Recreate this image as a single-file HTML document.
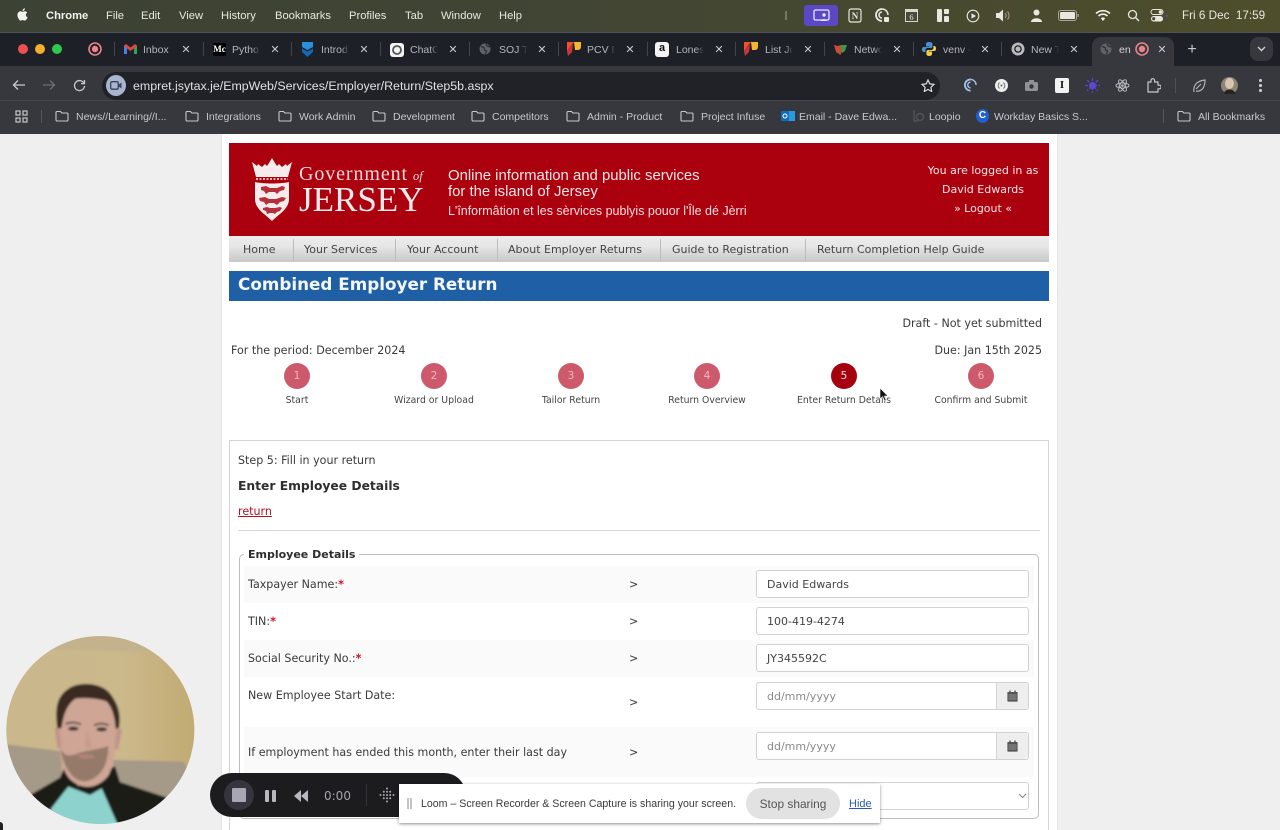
<!DOCTYPE html>
<html lang="en"><head><meta charset="utf-8"><title>Step 5b</title>
<style>
html,body{margin:0;padding:0;width:1280px;height:830px;overflow:hidden;background:#efefef}
body{position:relative;font-family:"DejaVu Sans",sans-serif;font-size:11.1px;color:#3a3a3a}
.a{position:absolute}
.t{position:absolute;white-space:nowrap;line-height:14px;margin-top:1px}
.c{transform:translateX(-50%)}
.r{transform:translateX(-100%)}
.m{font-family:"Liberation Sans",sans-serif;font-size:11.2px;color:#e8e8e0}
.tab{font-family:"Liberation Sans",sans-serif;font-size:10.5px;color:#b4b6ba}
.f{-webkit-mask-image:linear-gradient(90deg,#000 72%,transparent 100%);mask-image:linear-gradient(90deg,#000 72%,transparent 100%)}
.x{font-family:"Liberation Sans",sans-serif;font-size:11px;color:#c8cacc}
.b{font-family:"Liberation Sans",sans-serif;font-size:10.5px;color:#c6c8cb}
.nav{font-size:11px;color:#444}
.sep{position:absolute;top:239px;width:1px;height:22px;background:#bdbdbd}
.circ{position:absolute;top:363px;width:26px;height:26px;border-radius:50%;background:#cd5a6c;color:#eeb7be;text-align:center;line-height:26px;font-size:10.5px}
.lab{font-size:9.3px;color:#444}
.inp{position:absolute;left:756px;width:271px;height:26px;background:#fff;border:1px solid #d2d2d2;border-radius:3px}
.inp span{position:absolute;left:10px;top:6.500px;line-height:14px;color:#444;font-size:11px}
.ph span{color:#8a8a8a}
.add{position:absolute;right:0;top:0;width:31px;height:26px;background:#eee;border-left:1px solid #d6d6d6;border-radius:0 3px 3px 0}
.add svg{position:absolute;left:10px;top:7px}
svg{display:block}
</style></head><body>
<svg width="0" height="0" style="position:absolute">
<symbol id="fo" viewBox="0 0 14 12"><path d="M1 2.500a1 1 0 0 1 1-1h3.500l1.300 1.500H12a1 1 0 0 1 1 1v6a1 1 0 0 1-1 1H2a1 1 0 0 1-1-1z" fill="none" stroke="#c6c8cb" stroke-width="1.100"/></symbol>
<symbol id="gl" viewBox="0 0 12 12"><circle cx="6" cy="6" r="5.500" fill="#5f6368"/><path d="M2 3.500l3 1 .5 2.500 2 1-1 3M7 1l1 2 3 1" fill="none" stroke="#2b2d31" stroke-width="1.200"/></symbol>
<symbol id="cal" viewBox="0 0 11 12"><path d="M1 2h9a.6.6 0 0 1 .6.6V11a.6.6 0 0 1-.6.6H1A.6.6 0 0 1 .4 11V2.600A.6.6 0 0 1 1 2z" fill="#555"/><path d="M3 .5v2M8 .5v2" stroke="#555" stroke-width="1.400"/><path d="M1.500 5h8M1.500 7h8M1.500 9h8" stroke="#aaa" stroke-width=".7"/></symbol>
<symbol id="rec" viewBox="0 0 14 14"><circle cx="7" cy="7" r="6" fill="none" stroke="#e8848c" stroke-width="1.600"/><circle cx="7" cy="7" r="3.200" fill="#e8848c"/></symbol>
</svg>

<!-- mac menu bar -->
<div class="a" style="left:0;top:0;width:1280px;height:33px;background:linear-gradient(90deg,#3c4234 0,#414533 45%,#4e4e2c 100%)"></div>
<svg class="a" style="left:17px;top:8px" width="11" height="13" viewBox="0 0 14 16"><path d="M11.300 8.400c0-2 1.600-2.900 1.700-3-.9-1.400-2.400-1.600-2.900-1.600-1.200-.1-2.400.7-3 .7s-1.600-.7-2.600-.7C3.100 3.900 1.900 4.600 1.200 5.800c-1.400 2.400-.4 6 1 8 .7 1 1.500 2.100 2.500 2 1 0 1.400-.6 2.600-.6s1.500.6 2.600.6 1.800-1 2.500-2c.8-1.100 1.100-2.200 1.100-2.300-.1 0-2.200-.8-2.200-3.100zM9.300 2.500C9.800 1.800 10.200.9 10.100 0c-.8 0-1.700.5-2.300 1.200-.5.6-.9 1.500-.8 2.400.9.100 1.800-.4 2.300-1.100z" fill="#f1f1ee"/></svg>
<div class="t m" style="left:46px;top:8px;font-weight:bold;color:#f2f2ee">Chrome</div>
<div class="t m" style="left:106px;top:8px">File</div>
<div class="t m" style="left:141px;top:8px">Edit</div>
<div class="t m" style="left:179px;top:8px">View</div>
<div class="t m" style="left:221px;top:8px">History</div>
<div class="t m" style="left:275px;top:8px">Bookmarks</div>
<div class="t m" style="left:349px;top:8px">Profiles</div>
<div class="t m" style="left:405px;top:8px">Tab</div>
<div class="t m" style="left:441px;top:8px">Window</div>
<div class="t m" style="left:499px;top:8px">Help</div>
<div class="a" style="left:785px;top:11px;width:2px;height:9px;background:#77775c"></div>
<div class="a" style="left:804px;top:5px;width:34px;height:21px;border-radius:3px;background:#5a48c4"></div>
<svg class="a" style="left:813px;top:9px" width="17" height="13" viewBox="0 0 17 13"><rect x="1" y="1" width="15" height="10" rx="1.500" fill="none" stroke="#e8e6f8" stroke-width="1.300"/><circle cx="11" cy="6" r="1.700" fill="#e8e6f8"/><path d="M8 12c0-2.500 6-2.500 6 0z" fill="#e8e6f8"/></svg>
<svg class="a" style="left:848px;top:8px" width="14" height="15" viewBox="0 0 14 15"><rect x="1" y="1" width="12" height="13" rx="2" fill="none" stroke="#e8e8e0" stroke-width="1.200"/><text x="7" y="11" text-anchor="middle" font-family="Liberation Serif" font-weight="bold" font-size="9" fill="#e8e8e0">N</text></svg>
<svg class="a" style="left:875px;top:8px" width="15" height="15" viewBox="0 0 15 15"><path d="M7 1a6 6 0 1 0 0 12" fill="none" stroke="#e8e8e0" stroke-width="1.800"/><path d="M7 4a3 3 0 1 0 0 6" fill="none" stroke="#e8e8e0" stroke-width="1.500"/><path d="M7 1a6 6 0 0 1 6 6" fill="none" stroke="#e8e8e0" stroke-width="1.500"/><rect x="9" y="9" width="5" height="5" rx="1" fill="#e8e8e0"/></svg>
<svg class="a" style="left:904px;top:8px" width="15" height="15" viewBox="0 0 15 15"><rect x="1" y="1" width="13" height="13" fill="#d8d8d0"/><rect x="2" y="4" width="11" height="9" fill="#4a4a36"/><text x="7.500" y="12" text-anchor="middle" font-family="Liberation Serif" font-size="8.500" fill="#e8e8e0">6</text></svg>
<svg class="a" style="left:936px;top:9px" width="14" height="13" viewBox="0 0 14 13"><rect x="1" y="0" width="5" height="13" rx="1" fill="#e8e8e0"/><rect x="8" y="0" width="5" height="5" rx="1" fill="#e8e8e0"/><rect x="8" y="7" width="5" height="6" rx="1" fill="#e8e8e0"/></svg>
<svg class="a" style="left:966px;top:9px" width="14" height="14" viewBox="0 0 14 14"><circle cx="7" cy="7" r="5.800" fill="none" stroke="#e8e8e0" stroke-width="1.100"/><path d="M5.500 4.200L10 7l-4.500 2.800z" fill="#e8e8e0"/></svg>
<svg class="a" style="left:995px;top:9px" width="16" height="13" viewBox="0 0 16 13"><path d="M1 4h3l4-3.500v12L4 9H1z" fill="#e8e8e0"/><path d="M10 4a3.500 3.500 0 0 1 0 5M12.500 2.500a6 6 0 0 1 0 8" fill="none" stroke="#9a9a88" stroke-width="1.100"/></svg>
<svg class="a" style="left:1030px;top:9px" width="13" height="13" viewBox="0 0 13 13"><circle cx="6.500" cy="3.500" r="3" fill="#e8e8e0"/><path d="M1 13c0-5 11-5 11 0z" fill="#e8e8e0"/></svg>
<svg class="a" style="left:1058px;top:10px" width="21" height="11" viewBox="0 0 21 11"><rect x=".5" y=".5" width="18" height="10" rx="2.500" fill="none" stroke="#a8a898"/><rect x="2" y="2" width="15" height="7" rx="1.300" fill="#e8e8e0"/><rect x="19.500" y="4" width="1.200" height="3" fill="#a8a898"/></svg>
<svg class="a" style="left:1095px;top:9px" width="16" height="13" viewBox="0 0 16 13"><path d="M1 4.500a10 10 0 0 1 14 0M3.500 7a6.500 6.500 0 0 1 9 0" fill="none" stroke="#efefe8" stroke-width="1.600"/><path d="M5.800 9.300a3 3 0 0 1 4.400 0L8 12z" fill="#efefe8"/></svg>
<svg class="a" style="left:1127px;top:9px" width="13" height="13" viewBox="0 0 13 13"><circle cx="5.500" cy="5.500" r="4" fill="none" stroke="#e8e8e0" stroke-width="1.300"/><path d="M8.500 8.500L12 12" stroke="#e8e8e0" stroke-width="1.400"/></svg>
<svg class="a" style="left:1150px;top:9px" width="19" height="13" viewBox="0 0 19 13"><rect x="1" y="0.500" width="12" height="5" rx="2.500" fill="none" stroke="#e8e8e0"/><circle cx="10.500" cy="3" r="1.800" fill="#e8e8e0"/><rect x="1" y="7" width="12" height="5.500" rx="2.700" fill="#e8e8e0"/><circle cx="3.700" cy="9.700" r="1.600" fill="#4a4a36"/><circle cx="17" cy="7" r="1.200" fill="#5a48c4"/></svg>
<div class="t m" style="left:1182px;top:8px;font-size:11.700px">Fri 6 Dec&nbsp; 17:59</div>

<!-- tab strip -->
<div class="a" style="left:0;top:32px;width:1280px;height:35px;background:#1d2026;border-top:1px solid #50525a;box-sizing:border-box"></div>
<div class="a" style="left:18px;top:44px;width:10px;height:10px;border-radius:50%;background:#ef4f50"></div>
<div class="a" style="left:35px;top:44px;width:10px;height:10px;border-radius:50%;background:#f4b02c"></div>
<div class="a" style="left:52px;top:44px;width:10px;height:10px;border-radius:50%;background:#2fc84b"></div>
<svg class="a" style="left:88px;top:42px" width="14" height="14"><use href="#rec"/></svg>
<!-- separators -->
<div class="a" style="left:114px;top:42px;width:1px;height:14px;background:#44464c"></div>
<div class="a" style="left:203px;top:42px;width:1px;height:14px;background:#44464c"></div>
<div class="a" style="left:291px;top:42px;width:1px;height:14px;background:#44464c"></div>
<div class="a" style="left:380px;top:42px;width:1px;height:14px;background:#44464c"></div>
<div class="a" style="left:469px;top:42px;width:1px;height:14px;background:#44464c"></div>
<div class="a" style="left:558px;top:42px;width:1px;height:14px;background:#44464c"></div>
<div class="a" style="left:647px;top:42px;width:1px;height:14px;background:#44464c"></div>
<div class="a" style="left:735px;top:42px;width:1px;height:14px;background:#44464c"></div>
<div class="a" style="left:824px;top:42px;width:1px;height:14px;background:#44464c"></div>
<div class="a" style="left:913px;top:42px;width:1px;height:14px;background:#44464c"></div>
<div class="a" style="left:1001px;top:42px;width:1px;height:14px;background:#44464c"></div>
<!-- favicons -->
<svg class="a" style="left:124px;top:44px" width="13" height="10" viewBox="0 0 13 10"><path d="M0 1.500V10h3V4.500L6.500 7 10 4.500V10h3V1.500L11 0 6.500 3.500 2 0z" fill="#e0443a"/><path d="M0 1.500V10h3V4.500z" fill="#3f83ee"/><path d="M10 4.500V10h3V1.500z" fill="#2fa550"/></svg>
<div class="a" style="left:213px;top:43px;width:13px;height:13px;border-radius:2px;background:#000;color:#fff;font:bold 9px/13px 'Liberation Serif',serif;text-align:center">Mc</div>
<svg class="a" style="left:302px;top:42px" width="11" height="15" viewBox="0 0 11 15"><path d="M0 0h11v5L5.500 8 0 5z" fill="#2b8fdc"/><path d="M0 6.500l5.500 3 5.500-3V10l-5.500 5L0 10z" fill="#1565b8"/></svg>
<div class="a" style="left:390px;top:43px;width:14px;height:14px;border-radius:3px;background:#f4f4f4"></div>
<svg class="a" style="left:392px;top:45px" width="10" height="10" viewBox="0 0 10 10"><circle cx="5" cy="5" r="4" fill="none" stroke="#555" stroke-width="1.800"/></svg>
<svg class="a" style="left:479px;top:43px" width="12" height="12"><use href="#gl"/></svg>
<svg class="a" style="left:567px;top:42px" width="14" height="14" viewBox="0 0 14 14"><path d="M0 0h7L0 9z" fill="#f05030"/><path d="M7 0h7v5a3 3 0 0 1-3 3H8z" fill="#f5b530"/><path d="M0 9l6-7-1 8-4 4z" fill="#c9353a"/></svg>
<div class="a" style="left:655px;top:42px;width:14px;height:15px;border-radius:3px;background:#f4f4f4;color:#111;font:bold 11px/13px 'Liberation Sans',sans-serif;text-align:center">a</div>
<svg class="a" style="left:744px;top:42px" width="14" height="14" viewBox="0 0 14 14"><path d="M0 0h7L0 9z" fill="#f05030"/><path d="M7 0h7v5a3 3 0 0 1-3 3H8z" fill="#f5b530"/><path d="M0 9l6-7-1 8-4 4z" fill="#c9353a"/></svg>
<svg class="a" style="left:834px;top:44px" width="13" height="11" viewBox="0 0 13 11"><path d="M0 1l4 1 3-1 1.500 5L6.500 11 2 8z" fill="#c94c3a"/><path d="M7 1l6 0-2 6-3 2z" fill="#3a9a4a"/></svg>
<svg class="a" style="left:922px;top:42px" width="14" height="14" viewBox="0 0 14 14"><path d="M7 0C4 0 4 1.500 4 3v1.500h3.300V5H2C.5 5 0 6 0 7.500S.5 10 2 10h1.500V8c0-1.200 1-2 2.300-2h3c1 0 1.700-.8 1.700-1.800V2C10.500.7 9 0 7 0z" fill="#4a8fcf"/><path d="M7 14c3 0 3-1.500 3-3V9.500H6.700V9H12c1.500 0 2-1 2-2.500S13.500 4 12 4h-.6v2c0 1.200-1 2-2.300 2h-3c-1 0-1.700.8-1.700 1.800V12c0 1.300 1.600 2 2.600 2z" fill="#f3cf45"/></svg>
<svg class="a" style="left:1011px;top:42px" width="14" height="14" viewBox="0 0 14 14"><circle cx="7" cy="7" r="6.500" fill="#b8babd"/><circle cx="7" cy="7" r="3.800" fill="#1d2026"/><circle cx="7" cy="7" r="2.500" fill="#b8babd"/></svg>
<!-- tab labels -->
<div class="t tab" style="left:143px;top:42px;width:27px;overflow:hidden">Inbox</div>
<div class="t tab f" style="left:232px;top:42px;width:28px;overflow:hidden">Pytho</div>
<div class="t tab f" style="left:321px;top:42px;width:28px;overflow:hidden">Introd</div>
<div class="t tab f" style="left:410px;top:42px;width:28px;overflow:hidden">ChatG</div>
<div class="t tab f" style="left:499px;top:42px;width:28px;overflow:hidden">SOJ T</div>
<div class="t tab f" style="left:587px;top:42px;width:28px;overflow:hidden">PCV E</div>
<div class="t tab f" style="left:676px;top:42px;width:28px;overflow:hidden">Lones</div>
<div class="t tab f" style="left:765px;top:42px;width:28px;overflow:hidden">List Jo</div>
<div class="t tab f" style="left:854px;top:42px;width:28px;overflow:hidden">Netwo</div>
<div class="t tab f" style="left:943px;top:42px;width:28px;overflow:hidden">venv -</div>
<div class="t tab f" style="left:1031px;top:42px;width:28px;overflow:hidden">New T</div>
<!-- closes -->
<div class="t x c" style="left:186px;top:42px">✕</div>
<div class="t x c" style="left:275px;top:42px">✕</div>
<div class="t x c" style="left:364px;top:42px">✕</div>
<div class="t x c" style="left:453px;top:42px">✕</div>
<div class="t x c" style="left:542px;top:42px">✕</div>
<div class="t x c" style="left:630px;top:42px">✕</div>
<div class="t x c" style="left:719px;top:42px">✕</div>
<div class="t x c" style="left:808px;top:42px">✕</div>
<div class="t x c" style="left:897px;top:42px">✕</div>
<div class="t x c" style="left:985px;top:42px">✕</div>
<div class="t x c" style="left:1074px;top:42px">✕</div>
<!-- active tab -->
<div class="a" style="left:1092px;top:37px;width:82px;height:30px;background:#36383d;border-radius:9px 9px 0 0"></div>
<svg class="a" style="left:1100px;top:43px" width="12" height="12"><use href="#gl"/></svg>
<div class="t tab" style="left:1119px;top:42px;color:#d6d7d9">en</div>
<svg class="a" style="left:1135px;top:42px" width="14" height="14"><use href="#rec"/></svg>
<div class="t x c" style="left:1162px;top:42px">✕</div>
<div class="t c" style="left:1192px;top:41px;color:#ccc;font:16px/16px 'Liberation Sans',sans-serif">+</div>
<div class="a" style="left:1250px;top:37px;width:23px;height:24px;border-radius:8px;background:#36383d"></div>
<svg class="a" style="left:1257px;top:46px" width="9" height="6" viewBox="0 0 9 6"><path d="M1 1l3.500 3.500L8 1" fill="none" stroke="#d0d0d0" stroke-width="1.400"/></svg>

<!-- toolbar -->
<div class="a" style="left:0;top:66px;width:1280px;height:68px;background:#36383d"></div>
<div class="a" style="left:0;top:100px;width:1280px;height:1px;background:#44464b"></div>
<svg class="a" style="left:12px;top:79px" width="14" height="12" viewBox="0 0 14 12"><path d="M13 6H2M6 1.500L1.500 6 6 10.500" fill="none" stroke="#c8cacc" stroke-width="1.300"/></svg>
<svg class="a" style="left:42px;top:79px" width="14" height="12" viewBox="0 0 14 12"><path d="M1 6h11M8 1.500L12.500 6 8 10.500" fill="none" stroke="#6c6e73" stroke-width="1.300"/></svg>
<svg class="a" style="left:73px;top:79px" width="13" height="13" viewBox="0 0 13 13"><path d="M10.800 4A5 5 0 1 0 11.500 7" fill="none" stroke="#c8cacc" stroke-width="1.300"/><path d="M11.500 1v3.600H8" fill="none" stroke="#c8cacc" stroke-width="1.300"/></svg>
<div class="a" style="left:102px;top:72px;width:838px;height:28px;border-radius:14px;background:#202227"></div>
<div class="a" style="left:106px;top:75px;width:20px;height:21px;border-radius:50%;background:#a8b5cf"></div>
<svg class="a" style="left:110px;top:81px" width="12" height="9" viewBox="0 0 12 9"><rect x=".7" y=".7" width="7.500" height="7.500" rx="1.300" fill="none" stroke="#39425a" stroke-width="1.300"/><path d="M8 4l3.500-2.500v6L8 5z" fill="#39425a"/></svg>
<div class="t" style="left:133px;top:78px;font:12.400px/14px 'Liberation Sans',sans-serif;color:#dfe0e2">empret.jsytax.je/EmpWeb/Services/Employer/Return/Step5b.aspx</div>
<svg class="a" style="left:921px;top:79px" width="14" height="13" viewBox="0 0 14 13"><path d="M7 1l1.800 3.900 4.200.5-3.100 2.900.8 4.200L7 10.400 3.300 12.500l.8-4.200L1 5.400l4.200-.5z" fill="none" stroke="#dcdde0" stroke-width="1.200"/></svg>
<svg class="a" style="left:964px;top:78px" width="14" height="15" viewBox="0 0 15 15"><path d="M7 1a6 6 0 1 0 0 12" fill="none" stroke="#9fc0e8" stroke-width="2"/><path d="M7 4a3 3 0 1 0 0 6" fill="none" stroke="#9fc0e8" stroke-width="1.500"/><path d="M7 1a6 6 0 0 1 6 6" fill="none" stroke="#9fc0e8" stroke-width="1.500"/></svg>
<svg class="a" style="left:995px;top:79px" width="13" height="13" viewBox="0 0 13 13"><circle cx="6.500" cy="6.500" r="6.500" fill="#eee"/><path d="M4.500 3.500a4 4 0 0 0 0 6M8.500 3.500a4 4 0 0 1 0 6" fill="none" stroke="#666" stroke-width=".9"/><circle cx="6.500" cy="6.500" r="1" fill="#666"/></svg>
<svg class="a" style="left:1025px;top:80px" width="13" height="11" viewBox="0 0 13 11"><rect y="2" width="13" height="9" rx="1.500" fill="#8f9196"/><rect x="4" width="5" height="3" fill="#8f9196"/><circle cx="6.500" cy="6.500" r="2.200" fill="#36383d"/></svg>
<div class="a" style="left:1055px;top:78px;width:14px;height:15px;border-radius:2px;background:#f2f2f2;color:#111;font:bold 11px/15px 'Liberation Serif',serif;text-align:center">I</div>
<svg class="a" style="left:1085px;top:78px" width="15" height="15" viewBox="0 0 15 15"><circle cx="7.500" cy="7.500" r="3.500" fill="#5c48d8"/><path d="M7.500 0v15M0 7.500h15M2.200 2.200l10.600 10.600M12.800 2.200L2.200 12.800" stroke="#5c48d8" stroke-width="1.300" stroke-dasharray="3 1.500"/></svg>
<svg class="a" style="left:1115px;top:78px" width="15" height="15" viewBox="0 0 15 15"><g fill="none" stroke="#b8babf"><ellipse cx="7.500" cy="7.500" rx="6.500" ry="2.600"/><ellipse cx="7.500" cy="7.500" rx="6.500" ry="2.600" transform="rotate(60 7.500 7.500)"/><ellipse cx="7.500" cy="7.500" rx="6.500" ry="2.600" transform="rotate(120 7.500 7.500)"/></g><circle cx="7.500" cy="7.500" r="1.300" fill="#b8babf"/></svg>
<svg class="a" style="left:1147px;top:78px" width="14" height="15" viewBox="0 0 14 15"><path d="M1 4h3V2.500a1.800 1.800 0 0 1 3.600 0V4H11v3.200h1.300a1.800 1.800 0 0 1 0 3.600H11V14H1z" fill="none" stroke="#c8cacc" stroke-width="1.200" stroke-linejoin="round"/></svg>
<div class="a" style="left:1175px;top:78px;width:1px;height:15px;background:#4e5055"></div>
<svg class="a" style="left:1192px;top:78px" width="14" height="15" viewBox="0 0 14 15"><path d="M2 14c-1-6 2-11 11-12 0 7-3 12-9 11M4 11l5-5" fill="none" stroke="#b0b2b6" stroke-width="1.200"/></svg>
<svg class="a" style="left:1221px;top:77px" width="17" height="17" viewBox="0 0 17 17"><circle cx="8.500" cy="8.500" r="8.500" fill="#8f8478"/><ellipse cx="8.500" cy="6.500" rx="4.500" ry="5.500" fill="#d8c4b0"/><path d="M3 17c0-6 11-6 11 0z" fill="#26221f"/></svg>
<div class="a" style="left:1259px;top:79px;width:2.500px;height:2.500px;border-radius:50%;background:#c8cacc;box-shadow:0 5px 0 #c8cacc,0 10px 0 #c8cacc"></div>

<!-- bookmarks -->
<svg class="a" style="left:15px;top:110px" width="13" height="13" viewBox="0 0 13 13"><g fill="none" stroke="#c6c8cb" stroke-width="1.200"><rect x="1" y="1" width="4" height="4"/><rect x="8" y="1" width="4" height="4"/><rect x="1" y="8" width="4" height="4"/><rect x="8" y="8" width="4" height="4"/></g></svg>
<div class="a" style="left:41px;top:110px;width:1px;height:13px;background:#55575c"></div>
<svg class="a" style="left:55px;top:110px" width="14" height="12"><use href="#fo"/></svg><div class="t b" style="left:76px;top:109px">News//Learning//I...</div>
<svg class="a" style="left:185px;top:110px" width="14" height="12"><use href="#fo"/></svg><div class="t b" style="left:206px;top:109px">Integrations</div>
<svg class="a" style="left:278px;top:110px" width="14" height="12"><use href="#fo"/></svg><div class="t b" style="left:299px;top:109px">Work Admin</div>
<svg class="a" style="left:372px;top:110px" width="14" height="12"><use href="#fo"/></svg><div class="t b" style="left:393px;top:109px">Development</div>
<svg class="a" style="left:471px;top:110px" width="14" height="12"><use href="#fo"/></svg><div class="t b" style="left:492px;top:109px">Competitors</div>
<svg class="a" style="left:566px;top:110px" width="14" height="12"><use href="#fo"/></svg><div class="t b" style="left:587px;top:109px">Admin - Product</div>
<svg class="a" style="left:680px;top:110px" width="14" height="12"><use href="#fo"/></svg><div class="t b" style="left:701px;top:109px">Project Infuse</div>
<svg class="a" style="left:781px;top:110px" width="14" height="12" viewBox="0 0 14 12"><rect x="5" y="1" width="9" height="10" fill="#2a9ae0"/><rect width="8" height="10" y="1" rx="1" fill="#0f6cbd"/><circle cx="4" cy="6" r="2" fill="none" stroke="#fff"/></svg><div class="t b" style="left:799px;top:109px">Email - Dave Edwa...</div>
<svg class="a" style="left:911px;top:109px" width="14" height="14" viewBox="0 0 14 14"><path d="M3 1v11h4" fill="none" stroke="#505256" stroke-width="1.400"/><circle cx="9" cy="8" r="3.500" fill="none" stroke="#505256" stroke-width="1.400"/></svg><div class="t b" style="left:929px;top:109px">Loopio</div>
<div class="a" style="left:976px;top:109px;width:13px;height:14px;border-radius:50%;background:#1f5fd0;color:#fff;font:bold 10px/14px 'Liberation Sans',sans-serif;text-align:center">C</div><div class="t b" style="left:994px;top:109px">Workday Basics S...</div>
<div class="a" style="left:1163px;top:109px;width:1px;height:14px;background:#55575c"></div>
<svg class="a" style="left:1177px;top:110px" width="14" height="12"><use href="#fo"/></svg><div class="t b" style="left:1198px;top:109px">All Bookmarks</div>

<!-- page -->
<div class="a" style="left:221px;top:134px;width:837px;height:696px;background:#fff;border-left:1px solid #e4e4e4;border-right:1px solid #e4e4e4;box-sizing:border-box"></div>

<!-- banner -->
<div class="a" style="left:229px;top:143px;width:820px;height:93px;background:#ab000e"></div>
<svg class="a" style="left:250px;top:156px" width="44" height="67" viewBox="0 0 44 67">
<path d="M2 6l5 4 1-2 4 3 3-3 2 2 2-3 3-5 3 5 2 3 2-2 3 3 4-3 1 2 5-4-4 15H6z" fill="#f6ecec"/>
<path d="M6 23h32" stroke="#f6ecec" stroke-width="1.500" stroke-dasharray="2 1.500"/>
<path d="M5 26c8 2 26 2 34 0v17c0 10-10 15-17 22C15 58 5 53 5 43z" fill="#f6ecec"/>
<g fill="#b5303a"><path d="M11 31l5-1 4 2h7l5-2 3 1-1 3-4 1-3 3-2-2h-6l-3 2-2-3-3-1z"/><path d="M9 42l6-1 4 2h7l6-2 4 1-2 3-4 1-3 3-3-2h-5l-3 2-2-3-4-1z"/><path d="M13 52l4-1 3 1h5l5-1 2 1-2 3-3 1-2 2-2-1h-3l-3 1-1-3-3-1z"/></g>
</svg>
<div class="t" style="left:299px;top:162px;font:20px/22px 'Liberation Serif',serif;color:#f4d8d8;letter-spacing:.9px">Government<span style="font-size:12.500px;font-style:italic;letter-spacing:0;margin-left:5px">of</span></div>
<div class="t" style="left:299px;top:179px;font:35px/40px 'Liberation Serif',serif;color:#f8eaea">JERSEY</div>
<div class="t" style="left:448px;top:167px;font:14.900px/16px 'Liberation Sans',sans-serif;color:#fae6e6">Online information and public services</div>
<div class="t" style="left:448px;top:183px;font:14.900px/16px 'Liberation Sans',sans-serif;color:#fae6e6">for the island of Jersey</div>
<div class="t" style="left:448px;top:203px;font:12.470px/14px 'Liberation Sans',sans-serif;color:#f8dede">L'înformâtion et les sèrvices publyis pouor l'Île dé Jèrri</div>
<div class="t c" style="left:983px;top:163px;color:#fae6e6;font-size:11px">You are logged in as</div>
<div class="t c" style="left:983px;top:182px;color:#fae6e6;font-size:11px">David Edwards</div>
<div class="t c" style="left:983px;top:201px;color:#fae6e6;font-size:11px">» Logout «</div>

<!-- nav -->
<div class="a" style="left:229px;top:236px;width:820px;height:26px;background:linear-gradient(#ededed,#e6e6e6 40%,#c8c8c8)"></div>
<div class="sep" style="left:293px"></div><div class="sep" style="left:395px"></div><div class="sep" style="left:497px"></div><div class="sep" style="left:660px"></div><div class="sep" style="left:805px"></div>
<div class="t nav" style="left:243px;top:242px">Home</div>
<div class="t nav" style="left:304px;top:242px">Your Services</div>
<div class="t nav" style="left:407px;top:242px">Your Account</div>
<div class="t nav" style="left:508px;top:242px">About Employer Returns</div>
<div class="t nav" style="left:672px;top:242px">Guide to Registration</div>
<div class="t nav" style="left:817px;top:242px">Return Completion Help Guide</div>

<!-- title -->
<div class="a" style="left:229px;top:271px;width:820px;height:30px;background:#1f5fa6"></div>
<div class="t" style="left:238px;top:273px;font:bold 16.800px/20px 'DejaVu Sans',sans-serif;color:#f4f6fa">Combined Employer Return</div>

<div class="t r" style="left:1042px;top:316px">Draft - Not yet submitted</div>
<div class="t" style="left:231px;top:343px">For the period: December 2024</div>
<div class="t r" style="left:1042px;top:343px">Due: Jan 15th 2025</div>

<!-- steps -->
<div class="circ" style="left:284px">1</div>
<div class="circ" style="left:421px">2</div>
<div class="circ" style="left:558px">3</div>
<div class="circ" style="left:694px">4</div>
<div class="circ" style="left:831px;background:#a6000f;color:#f6dcdc">5</div>
<div class="circ" style="left:968px">6</div>
<div class="t c lab" style="left:297px;top:392.500px">Start</div>
<div class="t c lab" style="left:434px;top:392.500px">Wizard or Upload</div>
<div class="t c lab" style="left:571px;top:392.500px">Tailor Return</div>
<div class="t c lab" style="left:707px;top:392.500px">Return Overview</div>
<div class="t c lab" style="left:844px;top:392.500px">Enter Return Details</div>
<div class="t c lab" style="left:981px;top:392.500px">Confirm and Submit</div>
<svg class="a" style="left:879px;top:387px" width="10" height="15" viewBox="0 0 10 15"><path d="M1 1v11l2.600-2.400 2 4.400 1.600-.7-2-4.300H9z" fill="#111" stroke="#fff" stroke-width=".6"/></svg>

<!-- step box -->
<div class="a" style="left:229px;top:440px;width:820px;height:400px;border:1px solid #d4d4d4;box-sizing:border-box"></div>
<div class="t" style="left:238px;top:453px">Step 5: Fill in your return</div>
<div class="t" style="left:238px;top:478px;font-size:12.300px;font-weight:bold;color:#2e2e2e">Enter Employee Details</div>
<div class="t" style="left:238px;top:504px;color:#b01020;text-decoration:underline">return</div>
<div class="a" style="left:238px;top:530px;width:802px;height:1px;background:#d8d8d8"></div>

<!-- fieldset -->
<div class="a" style="left:239px;top:554px;width:800px;height:265px;border:1px solid #bdbdbd;border-radius:5px;box-sizing:border-box"></div>
<div class="a" style="left:244px;top:548px;width:115px;height:12px;background:#fff"></div>
<div class="t" style="left:248px;top:547px;font-weight:bold;font-size:11px;color:#2e2e2e">Employee Details</div>
<div class="a" style="left:244px;top:566px;width:790px;height:37px;background:#fafafa"></div>
<div class="a" style="left:244px;top:640px;width:790px;height:37px;background:#fafafa"></div>
<div class="a" style="left:244px;top:727px;width:790px;height:50px;background:#fafafa"></div>
<div class="t" style="left:248px;top:577px">Taxpayer Name:<b style="color:#d0102a">*</b></div>
<div class="t" style="left:248px;top:614px">TIN:<b style="color:#d0102a">*</b></div>
<div class="t" style="left:248px;top:651px">Social Security No.:<b style="color:#d0102a">*</b></div>
<div class="t" style="left:248px;top:688px">New Employee Start Date:</div>
<div class="t" style="left:248px;top:745px">If employment has ended this month, enter their last day</div>
<div class="t" style="left:629px;top:577px">&gt;</div>
<div class="t" style="left:629px;top:614px">&gt;</div>
<div class="t" style="left:629px;top:651px">&gt;</div>
<div class="t" style="left:629px;top:695px">&gt;</div>
<div class="t" style="left:629px;top:745px">&gt;</div>
<div class="inp" style="top:570px"><span style="top:7px">David Edwards</span></div>
<div class="inp" style="top:607px"><span style="top:7px">100-419-4274</span></div>
<div class="inp" style="top:644px"><span style="top:7px">JY345592C</span></div>
<div class="inp ph" style="top:682px"><span style="top:7px">dd/mm/yyyy</span><div class="add"><svg width="11" height="12"><use href="#cal"/></svg></div></div>
<div class="inp ph" style="top:732px"><span style="top:7px">dd/mm/yyyy</span><div class="add"><svg width="11" height="12"><use href="#cal"/></svg></div></div>
<div class="inp" style="top:782px"></div>
<svg class="a" style="left:1018px;top:793px" width="9" height="6" viewBox="0 0 9 6"><path d="M1 1l3.500 3.500L8 1" fill="none" stroke="#888" stroke-width="1.100"/></svg>

<!-- webcam -->
<svg class="a" style="left:0;top:620px" width="480" height="210" viewBox="0 0 1440 630">
<defs><clipPath id="cp"><circle cx="301" cy="330" r="282"/></clipPath>
<filter id="bl" x="-10%" y="-10%" width="120%" height="120%"><feGaussianBlur stdDeviation="3"/></filter>
<linearGradient id="wall" x1="0" y1="0" x2="1" y2="0"><stop offset="0" stop-color="#cab78c"/><stop offset=".6" stop-color="#cbb88b"/><stop offset="1" stop-color="#c0a96f"/></linearGradient></defs>
<g clip-path="url(#cp)"><g filter="url(#bl)">
<rect x="0" y="30" width="620" height="610" fill="url(#wall)"/>
<path d="M60 88L460 95 540 130V30H60z" fill="#c3b28c"/>
<path d="M10 372l175 22v90l-90 40-85-70zM340 420l210 5 30 50-90 70-150-70z" fill="#a59987"/>
<path d="M85 528l95-55 15-35 40 60 110-60 15 48 150 50-70 110H110z" fill="#1c1a19"/>
<path d="M205 500l65 25 35-20 55 125-110 15-100-75z" fill="#8ed2cd"/>
<path d="M176 290c-5 90 6 170 43 195 35 25 72 20 104-15 24-40 28-105 24-195-25-80-155-70-171 15z" fill="#cfa595"/>
<path d="M164 325l14-5 6 60-12 5zM350 322l16 8-12 60-10-5z" fill="#c0958a"/>
<path d="M180 385c10 20 26 25 45 18 30-12 60-12 100-25 0 55-20 92-62 105-40 8-70-35-83-98z" fill="#7e6a5c" opacity=".72"/>
<path d="M172 325c-8-60-2-95 32-118 28-22 95-22 125 12 25 32 35 62 28 105l-10 2c-2-32-10-65-28-82-22-8-65-12-92-8-28 18-38 55-42 88z" fill="#3a2b22"/>
<ellipse cx="220" cy="326" rx="16" ry="6" fill="#3e3638"/><ellipse cx="305" cy="328" rx="16" ry="6" fill="#3e3638"/>
<path d="M197 312q23-10 46 2M282 316q23-10 44 0" stroke="#6a5346" stroke-width="6" fill="none"/>
<path d="M262 330l-8 50q10 8 22 0z" fill="#c49888" opacity=".7"/>
<path d="M228 408q30-10 60 2-30 12-60-2z" fill="#b5837a"/>
</g></g></svg>
<div class="a" style="left:0;top:822px;width:3px;height:8px;background:#222;border-radius:0 8px 0 0"></div>

<!-- loom bar -->
<div class="a" style="left:210px;top:773px;width:256px;height:44px;border-radius:22px;background:#1c1c1e"></div>
<div class="a" style="left:224px;top:780px;width:30px;height:30px;border-radius:50%;background:#36353f"></div>
<div class="a" style="left:232px;top:788px;width:14px;height:14px;border-radius:1px;background:#a9a6b4"></div>
<div class="a" style="left:265px;top:790px;width:4px;height:12px;background:#b8b8c0;border-radius:1px"></div>
<div class="a" style="left:272px;top:790px;width:4px;height:12px;background:#b8b8c0;border-radius:1px"></div>
<svg class="a" style="left:293px;top:790px" width="16" height="12" viewBox="0 0 16 12"><path d="M8 0v12L1 6zM15 0v12L8 6z" fill="#b8b8c0"/></svg>
<div class="t" style="left:324px;top:788px;color:#a4a4ac;font-size:12px">0:00</div>
<div class="a" style="left:366px;top:784px;width:1px;height:22px;background:#33333a"></div>
<svg class="a" style="left:379px;top:787px" width="16" height="16" viewBox="0 0 16 16"><g fill="#a8a8b0"><circle cx="8" cy="1.500" r="1"/><circle cx="4.800" cy="4.800" r="1"/><circle cx="8" cy="4.800" r="1"/><circle cx="11.200" cy="4.800" r="1"/><circle cx="1.500" cy="8" r="1"/><circle cx="4.800" cy="8" r="1"/><circle cx="8" cy="8" r="1"/><circle cx="11.200" cy="8" r="1"/><circle cx="14.500" cy="8" r="1"/><circle cx="4.800" cy="11.200" r="1"/><circle cx="8" cy="11.200" r="1"/><circle cx="11.200" cy="11.200" r="1"/><circle cx="8" cy="14.500" r="1"/></g></svg>

<!-- sharing dialog -->
<div class="a" style="left:399px;top:784px;width:481px;height:39px;background:#fff;box-shadow:0 1px 3px rgba(0,0,0,.45)"></div>
<div class="a" style="left:407px;top:798px;width:1.500px;height:11px;background:#c4c4c4"></div>
<div class="a" style="left:410px;top:798px;width:1.500px;height:11px;background:#c4c4c4"></div>
<div class="t" style="left:421px;top:796px;font:10.600px/14px 'Liberation Sans',sans-serif;color:#3a3a3a">Loom – Screen Recorder &amp; Screen Capture is sharing your screen.</div>
<div class="a" style="left:746px;top:788px;width:94px;height:31px;border-radius:16px;background:#e2e2e2"></div>
<div class="t c" style="left:793px;top:796px;font:11.900px/14px 'Liberation Sans',sans-serif;color:#555">Stop sharing</div>
<div class="t" style="left:849px;top:796px;font:11px/14px 'Liberation Sans',sans-serif;color:#2a5bb0;text-decoration:underline">Hide</div>
</body></html>
